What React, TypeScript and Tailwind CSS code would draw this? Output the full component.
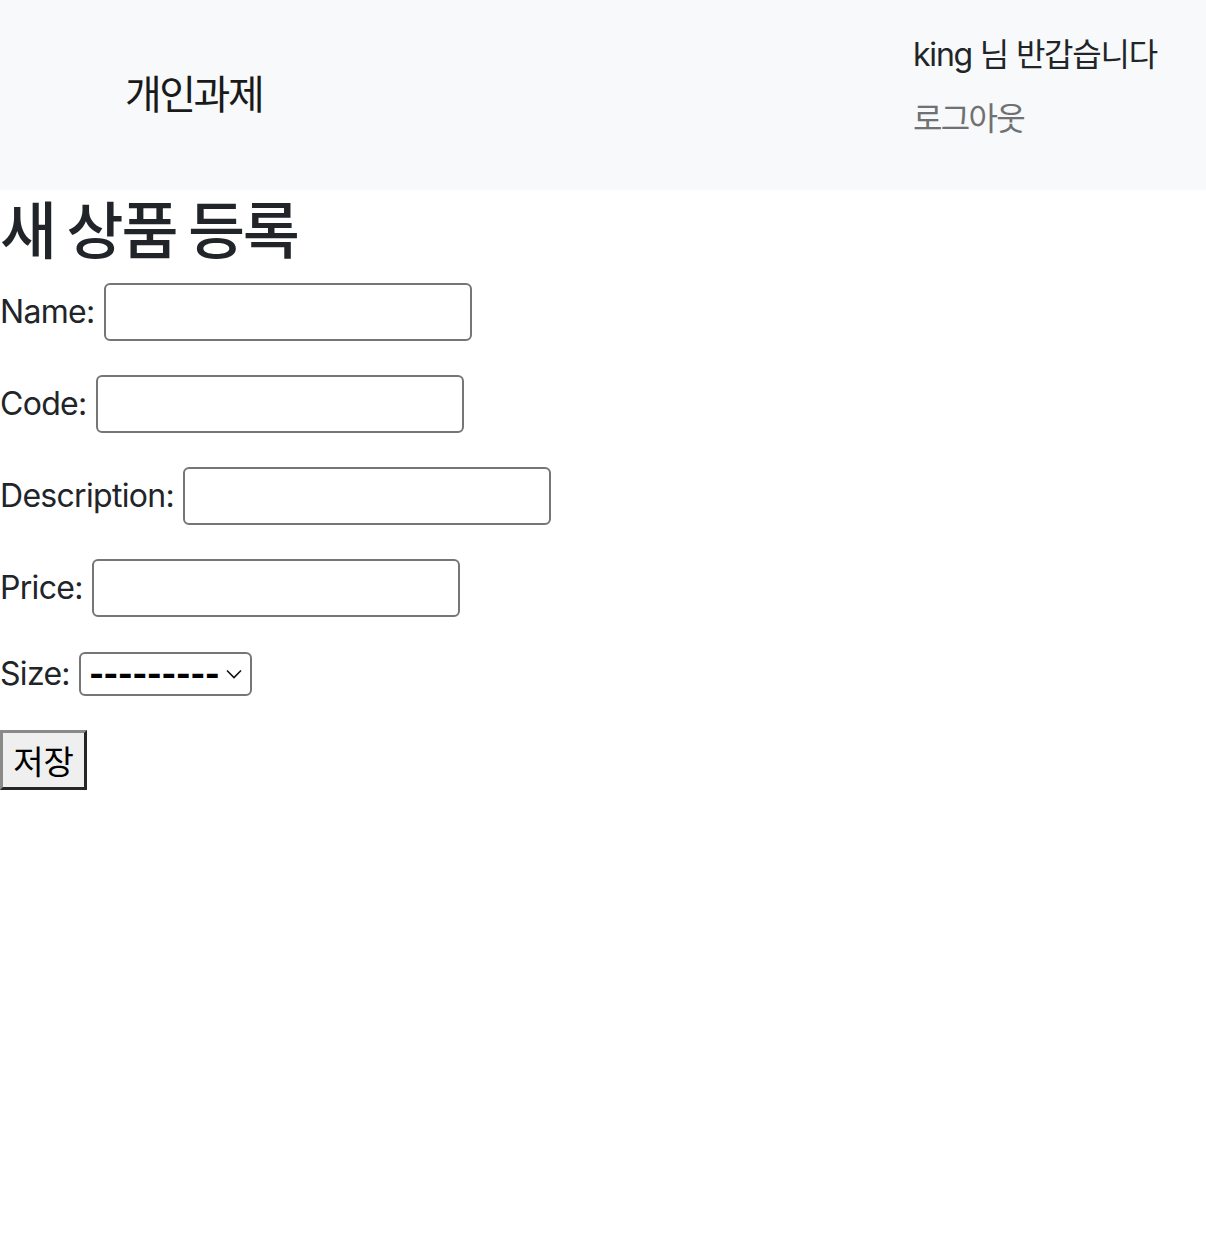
import React from "react";

const sans = { fontFamily: "Inter, 'Noto Sans CJK KR', sans-serif" };

function Row({ label, children }: { label: string; children?: React.ReactNode }) {
  return (
    <div className="flex h-[60px] items-center mb-[32px]">
      <label className="text-[32px] leading-[48px] text-[#212529] tracking-[-0.7px]">{label}</label>
      <span className="inline-block w-[9px]" />
      {children}
    </div>
  );
}

function TextInput() {
  return (
    <input
      type="text"
      className="h-[58px] w-[368px] rounded-[6px] border-2 border-[#767676] bg-white px-[4px] text-[32px] outline-none"
    />
  );
}

export default function App() {
  return (
    <div className="min-h-[1246px] w-full bg-white" style={sans}>
      <nav className="flex h-[190px] items-center bg-[#f8f9fa]">
        <div
          className="mb-[6px] pl-[125px] text-[40px] leading-[60px] text-[#1a1a1a] tracking-[-2.5px]"
          style={{ fontFamily: "'Noto Sans CJK KR', sans-serif" }}
        >
          개인과제
        </div>
        <div className="ml-auto flex w-[293px] flex-col">
          <div className="text-[32px] leading-[48px] text-[#212529] tracking-[-1.2px]">king 님 반갑습니다</div>
          <div className="py-[16px] text-[32px] leading-[48px] text-[#707172] tracking-[-1.7px]">로그아웃</div>
        </div>
      </nav>
      <h1
        className="mb-[18px] text-[62px] font-medium leading-[74px] text-[#212529] tracking-[-2.2px]"
        style={{ fontFamily: "'Noto Sans CJK KR', sans-serif" }}
      >
        새 상품 등록
      </h1>
      <form className="flex flex-col" onSubmit={(e) => e.preventDefault()}>
        <Row label="Name:">
          <TextInput />
        </Row>
        <Row label="Code:">
          <TextInput />
        </Row>
        <Row label="Description:">
          <TextInput />
        </Row>
        <Row label="Price:">
          <TextInput />
        </Row>
        <div className="mb-[32px] flex h-[48px] items-center">
          <label className="text-[32px] leading-[48px] text-[#212529] tracking-[-0.7px]">Size:</label>
          <span className="inline-block w-[9px]" />
          <div className="relative flex h-[44px] w-[173px] items-center rounded-[6px] border-2 border-[#767676] bg-white pl-[8px]">
            <span
              className="text-[32px] leading-[30px] text-black tracking-[-0.6px]"
              style={{ fontFamily: "Inter, sans-serif", fontWeight: 800 }}
            >
              ---------
            </span>
            <svg className="absolute right-[8px] top-[15px]" width="16" height="10" viewBox="0 0 16 10" fill="none">
              <path d="M1 1.5 L8 8.5 L15 1.5" stroke="#111" strokeWidth="1.6" />
            </svg>
          </div>
        </div>
        <div>
          <button
            type="submit"
            className="h-[60px] w-[87px] border-[3px] border-t-[#8a8a8a] border-l-[#8a8a8a] border-r-[#262626] border-b-[#262626] bg-[#efefef] text-[33px] leading-[48px] text-black"
            style={{ fontFamily: "'Noto Sans CJK KR', sans-serif" }}
          >
            저장
          </button>
        </div>
      </form>
    </div>
  );
}
